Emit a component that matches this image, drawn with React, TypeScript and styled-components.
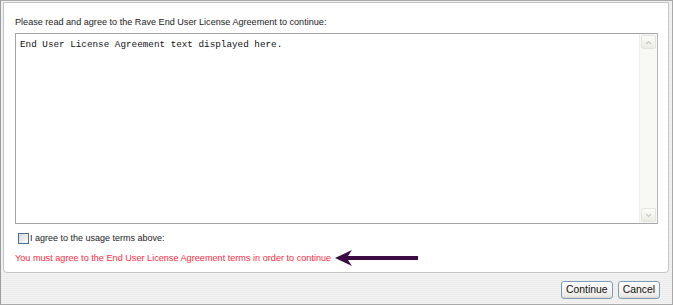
import React, { useState } from 'react';
import styled, { createGlobalStyle } from 'styled-components';

const GlobalStyle = createGlobalStyle`
  html, body {
    margin: 0;
    padding: 0;
    background: #ffffff;
  }
  body {
    font-family: "Liberation Sans", Arial, sans-serif;
  }
`;

const Frame = styled.div`
  width: 673px;
  height: 305px;
  box-sizing: border-box;
  border: 1px solid #a9a9a9;
  border-left-color: #9c9c9c;
  padding: 1px 3px 0 2px;
  display: flex;
  flex-direction: column;
  background: repeating-linear-gradient(
    to bottom,
    #f3f3f3 0px,
    #f3f3f3 1px,
    #ebebeb 1px,
    #ebebeb 2px
  );
`;

const Panel = styled.div`
  height: 271px;
  box-sizing: border-box;
  background: #ffffff;
  border: 1px solid #c4c4c4;
  border-radius: 0 0 4px 4px;
  padding: 12px 10px 0 11px;
  display: flex;
  flex-direction: column;
`;

const Intro = styled.div`
  font-size: 9.1px;
  color: #222;
  line-height: 14px;
  margin-bottom: 4px;
`;

const TextBox = styled.div`
  height: 191px;
  box-sizing: border-box;
  border: 1px solid #a5a5a5;
  border-right-color: #b8b8b8;
  display: flex;
`;

const TextContent = styled.div`
  flex: 1;
  padding: 5px 4px;
  font-family: "Liberation Mono", "Courier New", monospace;
  font-size: 9.3px;
  color: #111;
  line-height: 12px;
`;

const ScrollTrack = styled.div`
  width: 15px;
  background: #f8f8f5;
  border-left: 1px solid #eeeeea;
  display: flex;
  flex-direction: column;
  justify-content: space-between;
  padding: 1px 1px;
`;

const ScrollButton = styled.div`
  height: 14px;
  box-sizing: border-box;
  border: 1px solid #e4e4de;
  border-radius: 2px;
  background: linear-gradient(#fbfbf9, #ececE6);
  display: flex;
  align-items: center;
  justify-content: center;
`;

const AgreeRow = styled.label`
  display: flex;
  align-items: center;
  margin: 8px 0 0 3px;
  font-size: 9px;
  color: #222;
  line-height: 12px;
`;

const CheckBox = styled.span<{ $checked: boolean }>`
  width: 11px;
  height: 11px;
  box-sizing: border-box;
  border: 1px solid #4a6f96;
  background: linear-gradient(135deg, #dcdcd6, #fafaf8);
  margin-right: 1px;
  display: inline-flex;
  align-items: center;
  justify-content: center;
  font-size: 9px;
  color: #21a121;
`;

const ErrorRow = styled.div`
  display: flex;
  align-items: center;
  margin-top: 5px;
  height: 18px;
`;

const ErrorText = styled.span`
  font-size: 9.15px;
  color: #ff2b45;
  line-height: 12px;
  margin-right: 4px;
`;

const ButtonBar = styled.div`
  flex: 1;
  display: flex;
  justify-content: flex-end;
  align-items: center;
  gap: 5px;
  padding-right: 9px;
  padding-top: 2px;
`;

const Button = styled.button`
  height: 18px;
  box-sizing: border-box;
  padding: 0 4px;
  border: 1px solid #7d9ab8;
  border-radius: 3px;
  background: linear-gradient(#ffffff, #ecebe6 85%, #d9d7cf);
  font-family: "Liberation Sans", Arial, sans-serif;
  font-size: 10.4px;
  color: #111;
  line-height: 14px;
  cursor: pointer;
`;

const Chevron: React.FC<{ up?: boolean }> = ({ up }) => (
  <svg width="7" height="5" viewBox="0 0 7 5">
    <path
      d={up ? 'M1 4 L3.5 1.5 L6 4' : 'M1 1 L3.5 3.5 L6 1'}
      fill="none"
      stroke="#c8c8c0"
      strokeWidth="1.2"
    />
  </svg>
);

const PointerArrow = () => (
  <svg width="83" height="18" viewBox="0 0 83 18">
    <polygon points="0,9 17,1 13,7 83,7 83,11 13,11 17,17" fill="#3b0c44" />
  </svg>
);

const App: React.FC = () => {
  const [agreed, setAgreed] = useState(false);

  return (
    <>
      <GlobalStyle />
      <Frame>
        <Panel>
          <Intro>Please read and agree to the Rave End User License Agreement to continue:</Intro>
          <TextBox>
            <TextContent>End User License Agreement text displayed here.</TextContent>
            <ScrollTrack>
              <ScrollButton><Chevron up /></ScrollButton>
              <ScrollButton><Chevron /></ScrollButton>
            </ScrollTrack>
          </TextBox>
          <AgreeRow onClick={() => setAgreed(!agreed)}>
            <CheckBox $checked={agreed}>{agreed ? '✓' : ''}</CheckBox>
            I agree to the usage terms above:
          </AgreeRow>
          <ErrorRow>
            <ErrorText>You must agree to the End User License Agreement terms in order to continue</ErrorText>
            <PointerArrow />
          </ErrorRow>
        </Panel>
        <ButtonBar>
          <Button>Continue</Button>
          <Button>Cancel</Button>
        </ButtonBar>
      </Frame>
    </>
  );
};

export default App;
